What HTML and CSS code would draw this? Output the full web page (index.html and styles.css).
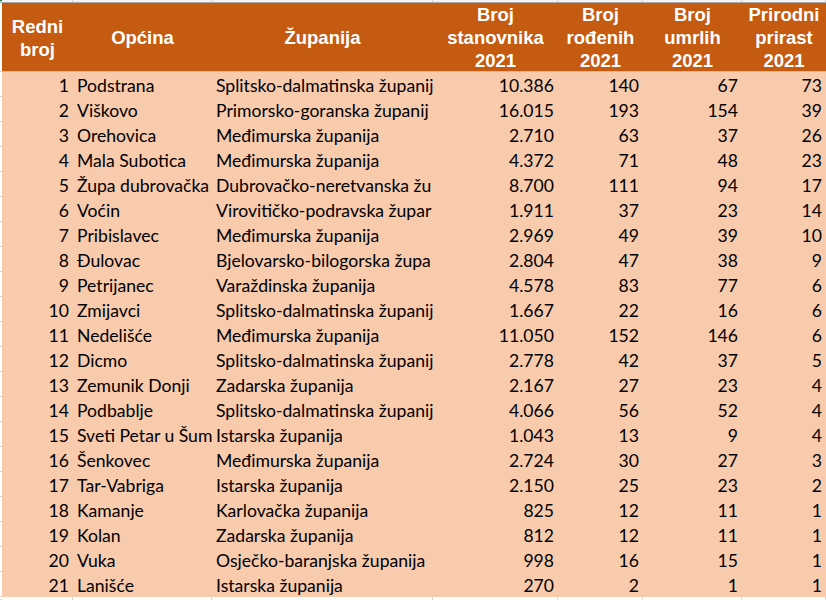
FILE: index.html
```html
<!DOCTYPE html>
<html lang="hr">
<head>
<meta charset="utf-8">
<title>Prirodni prirast 2021</title>
<link rel="stylesheet" href="styles.css">
</head>
<body>
<div class="sheet">
  <div class="row strip">
    <div class="gut corner"></div><div class="c"></div><div class="c"></div><div class="c"></div><div class="c"></div><div class="c"></div><div class="c"></div><div class="c"></div>
  </div>
  <div class="row head">
    <div class="gut"></div>
    <div class="h">Redni<br>broj</div>
    <div class="h">Općina</div>
    <div class="h">Županija</div>
    <div class="h">Broj<br>stanovnika<br>2021</div>
    <div class="h">Broj<br>rođenih<br>2021</div>
    <div class="h">Broj<br>umrlih<br>2021</div>
    <div class="h">Prirodni<br>prirast<br>2021</div>
  </div>
  <div class="body">
    <div class="row r"><div class="gut"></div><div class="n">1</div><div class="t">Podstrana</div><div class="t">Splitsko-dalmatinska županij</div><div class="n">10.386</div><div class="n">140</div><div class="n">67</div><div class="n">73</div></div>
    <div class="row r"><div class="gut"></div><div class="n">2</div><div class="t">Viškovo</div><div class="t">Primorsko-goranska županij</div><div class="n">16.015</div><div class="n">193</div><div class="n">154</div><div class="n">39</div></div>
    <div class="row r"><div class="gut"></div><div class="n">3</div><div class="t">Orehovica</div><div class="t">Međimurska županija</div><div class="n">2.710</div><div class="n">63</div><div class="n">37</div><div class="n">26</div></div>
    <div class="row r"><div class="gut"></div><div class="n">4</div><div class="t">Mala Subotica</div><div class="t">Međimurska županija</div><div class="n">4.372</div><div class="n">71</div><div class="n">48</div><div class="n">23</div></div>
    <div class="row r"><div class="gut"></div><div class="n">5</div><div class="t">Župa dubrovačka</div><div class="t">Dubrovačko-neretvanska žu</div><div class="n">8.700</div><div class="n">111</div><div class="n">94</div><div class="n">17</div></div>
    <div class="row r"><div class="gut"></div><div class="n">6</div><div class="t">Voćin</div><div class="t">Virovitičko-podravska župar</div><div class="n">1.911</div><div class="n">37</div><div class="n">23</div><div class="n">14</div></div>
    <div class="row r"><div class="gut"></div><div class="n">7</div><div class="t">Pribislavec</div><div class="t">Međimurska županija</div><div class="n">2.969</div><div class="n">49</div><div class="n">39</div><div class="n">10</div></div>
    <div class="row r"><div class="gut"></div><div class="n">8</div><div class="t">Đulovac</div><div class="t">Bjelovarsko-bilogorska župa</div><div class="n">2.804</div><div class="n">47</div><div class="n">38</div><div class="n">9</div></div>
    <div class="row r"><div class="gut"></div><div class="n">9</div><div class="t">Petrijanec</div><div class="t">Varaždinska županija</div><div class="n">4.578</div><div class="n">83</div><div class="n">77</div><div class="n">6</div></div>
    <div class="row r"><div class="gut"></div><div class="n">10</div><div class="t">Zmijavci</div><div class="t">Splitsko-dalmatinska županij</div><div class="n">1.667</div><div class="n">22</div><div class="n">16</div><div class="n">6</div></div>
    <div class="row r"><div class="gut"></div><div class="n">11</div><div class="t">Nedelišće</div><div class="t">Međimurska županija</div><div class="n">11.050</div><div class="n">152</div><div class="n">146</div><div class="n">6</div></div>
    <div class="row r"><div class="gut"></div><div class="n">12</div><div class="t">Dicmo</div><div class="t">Splitsko-dalmatinska županij</div><div class="n">2.778</div><div class="n">42</div><div class="n">37</div><div class="n">5</div></div>
    <div class="row r"><div class="gut"></div><div class="n">13</div><div class="t">Zemunik Donji</div><div class="t">Zadarska županija</div><div class="n">2.167</div><div class="n">27</div><div class="n">23</div><div class="n">4</div></div>
    <div class="row r"><div class="gut"></div><div class="n">14</div><div class="t">Podbablje</div><div class="t">Splitsko-dalmatinska županij</div><div class="n">4.066</div><div class="n">56</div><div class="n">52</div><div class="n">4</div></div>
    <div class="row r"><div class="gut"></div><div class="n">15</div><div class="t">Sveti Petar u Šum</div><div class="t">Istarska županija</div><div class="n">1.043</div><div class="n">13</div><div class="n">9</div><div class="n">4</div></div>
    <div class="row r"><div class="gut"></div><div class="n">16</div><div class="t">Šenkovec</div><div class="t">Međimurska županija</div><div class="n">2.724</div><div class="n">30</div><div class="n">27</div><div class="n">3</div></div>
    <div class="row r"><div class="gut"></div><div class="n">17</div><div class="t">Tar-Vabriga</div><div class="t">Istarska županija</div><div class="n">2.150</div><div class="n">25</div><div class="n">23</div><div class="n">2</div></div>
    <div class="row r"><div class="gut"></div><div class="n">18</div><div class="t">Kamanje</div><div class="t">Karlovačka županija</div><div class="n">825</div><div class="n">12</div><div class="n">11</div><div class="n">1</div></div>
    <div class="row r"><div class="gut"></div><div class="n">19</div><div class="t">Kolan</div><div class="t">Zadarska županija</div><div class="n">812</div><div class="n">12</div><div class="n">11</div><div class="n">1</div></div>
    <div class="row r"><div class="gut"></div><div class="n">20</div><div class="t">Vuka</div><div class="t">Osječko-baranjska županija</div><div class="n">998</div><div class="n">16</div><div class="n">15</div><div class="n">1</div></div>
    <div class="row r"><div class="gut"></div><div class="n">21</div><div class="t">Lanišće</div><div class="t">Istarska županija</div><div class="n">270</div><div class="n">2</div><div class="n">1</div><div class="n">1</div></div>
  </div>
  <div class="row strip bottom">
    <div class="gut"></div><div class="c"></div><div class="c"></div><div class="c"></div><div class="c"></div><div class="c"></div><div class="c"></div><div class="c"></div>
  </div>
</div>
</body>
</html>
```

FILE: styles.css
```css
html, body {
  margin: 0;
  padding: 0;
  background: #ffffff;
}

.sheet {
  width: 826px;
  height: 600px;
  overflow: hidden;
  display: flex;
  flex-direction: column;
}

.row {
  display: grid;
  grid-template-columns: 2px 71px 139px 221px 125px 85px 99px 84px;
  flex: none;
}

.strip {
  height: 3px;
  box-sizing: border-box;
  border-bottom: 1px solid #a9a9a9;
  background: #f3f3f3;
}

.strip .c {
  border-right: 1px solid #d4d4d4;
}

.strip .corner {
  background: #217346;
}

.strip.bottom {
  height: 3px;
  border-bottom: none;
  background: #ffffff;
}

.gut {
  background: #ffffff;
  box-shadow: inset 0 -1px 0 #d4d4d4;
}

.head {
  height: 68px;
  background: #c55a11;
  border-bottom: 1px solid #bcbcbc;
}

.head .gut {
  background: #ffffff;
}

.h {
  display: flex;
  align-items: center;
  justify-content: center;
  text-align: center;
  color: #ffffff;
  font-family: "Liberation Sans", Arial, sans-serif;
  font-weight: bold;
  font-size: 18.5px;
  line-height: 23px;
  white-space: nowrap;
}

.body {
  background: #f8cbad;
}

.r {
  height: 25px;
}

.n, .t {
  font-family: Lato, "Noto Sans", sans-serif;
  font-size: 17.6px;
  line-height: 27px;
  height: 25px;
  color: #000000;
  white-space: nowrap;
  overflow: hidden;
  background: #f8cbad;
}

.n {
  text-align: right;
  padding-right: 4px;
}

.t {
  text-align: left;
  padding-left: 4px;
}
```
